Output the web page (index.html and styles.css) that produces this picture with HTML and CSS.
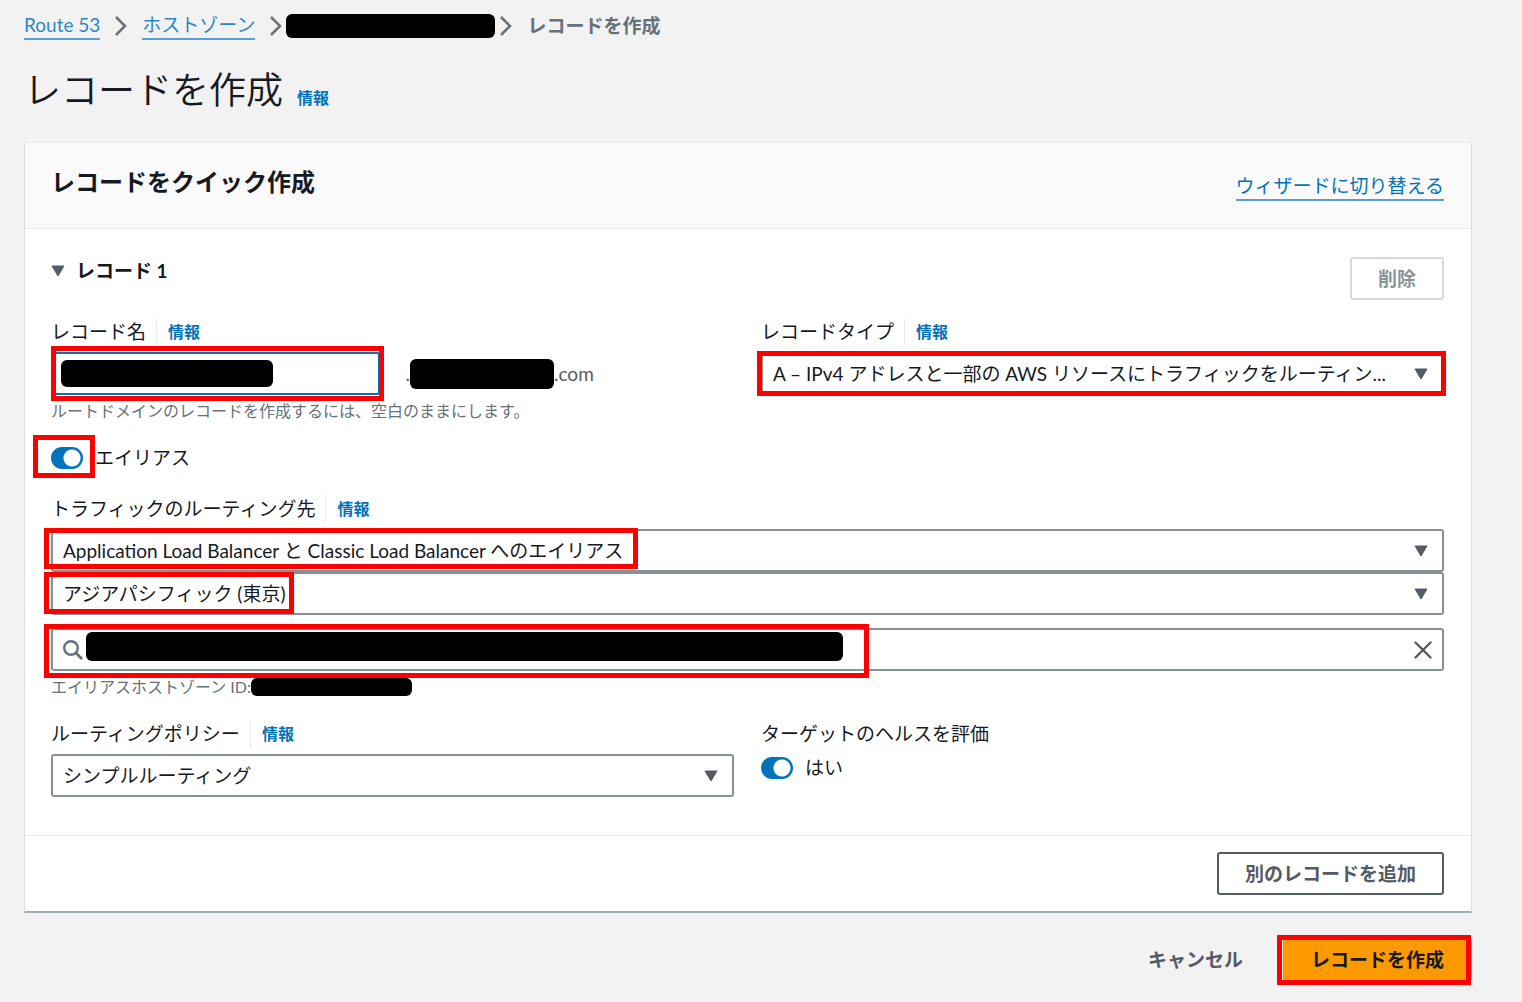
FILE: index.html
```html
<!DOCTYPE html>
<html lang="ja">
<head>
<meta charset="utf-8">
<meta name="viewport" content="width=device-width, initial-scale=1">
<title>レコードを作成</title>
<link rel="stylesheet" href="styles.css">
</head>
<body>
<svg class="sprite" aria-hidden="true">
  <symbol id="chevron" viewBox="0 0 12 20"><path d="M1 1l9 9-9 9" fill="none" stroke="currentColor" stroke-width="2.5"/></symbol>
  <symbol id="caret" viewBox="0 0 14 12"><path d="M1 1h12L7 11z" fill="currentColor" stroke="currentColor" stroke-linejoin="round"/></symbol>
</svg>

<nav aria-label="パンくずリスト">
  <ol class="breadcrumb">
    <li><a class="link" href="#">Route 53</a></li>
    <li class="separator"><svg class="chevron"><use href="#chevron"/></svg></li>
    <li><a class="link" href="#">ホストゾーン</a></li>
    <li class="separator separator-tight"><svg class="chevron"><use href="#chevron"/></svg></li>
    <li><span class="redacted redacted-zone"></span></li>
    <li class="separator separator-after"><svg class="chevron"><use href="#chevron"/></svg></li>
    <li class="current">レコードを作成</li>
  </ol>
</nav>

<main>
  <header class="page-title">
    <h1>レコードを作成</h1>
    <a class="info" href="#">情報</a>
  </header>

  <form>
    <section class="panel">
      <header class="panel-header">
        <h2>レコードをクイック作成</h2>
        <a class="link wizard-link" href="#">ウィザードに切り替える</a>
      </header>

      <div class="panel-body">
        <div class="record-bar">
          <h3><svg class="caret"><use href="#caret"/></svg>レコード 1</h3>
          <button class="button" type="button" disabled>削除</button>
        </div>

        <div class="sections">
          <div class="columns">
            <div class="field">
              <div class="label-row">
                <label for="record-name">レコード名</label>
                <a class="info" href="#">情報</a>
              </div>
              <div class="name-row">
                <div class="highlight highlight-name">
                  <input class="control name-input" id="record-name" type="text">
                  <span class="redacted redacted-name"></span>
                </div>
                <span class="domain">.<span class="redacted redacted-domain"></span>.com</span>
              </div>
              <p class="hint">ルートドメインのレコードを作成するには、空白のままにします。</p>
            </div>

            <div class="field">
              <div class="label-row">
                <label for="record-type">レコードタイプ</label>
                <a class="info" href="#">情報</a>
              </div>
              <div class="select highlight highlight-type">
                <select class="control" id="record-type"><option>A – IPv4 アドレスと一部の AWS リソースにトラフィックをルーティン...</option></select>
                <svg class="caret"><use href="#caret"/></svg>
              </div>
            </div>
          </div>

          <div class="toggle-row">
            <span class="highlight highlight-toggle"><input class="toggle" id="alias" type="checkbox" role="switch" checked></span>
            <label for="alias">エイリアス</label>
          </div>

          <div class="field">
            <div class="label-row">
              <label for="target">トラフィックのルーティング先</label>
              <a class="info" href="#">情報</a>
            </div>
            <div class="stack">
              <div class="select">
                <select class="control" id="target"><option>Application Load Balancer と Classic Load Balancer へのエイリアス</option></select>
                <svg class="caret"><use href="#caret"/></svg>
                <span class="mark mark-target"></span>
              </div>
              <div class="select">
                <select class="control" aria-label="リージョン"><option>アジアパシフィック (東京)</option></select>
                <svg class="caret"><use href="#caret"/></svg>
                <span class="mark mark-region"></span>
              </div>
              <div class="control search">
                <svg class="search-icon" viewBox="0 0 20 20"><circle cx="8" cy="8" r="6.8" fill="none" stroke="currentColor" stroke-width="2.4"/><path d="M13 13l6 6" stroke="currentColor" stroke-width="2.6"/></svg>
                <input type="text" aria-label="ロードバランサー">
                <button class="clear" type="button" aria-label="クリア"><svg viewBox="0 0 18 18"><path d="M1.500 1.500l15 15M16.500 1.500l-15 15" fill="none" stroke="currentColor" stroke-width="2.400" stroke-linecap="round"/></svg></button>
                <span class="redacted redacted-balancer"></span>
                <span class="mark mark-balancer"></span>
              </div>
            </div>
            <p class="hint">エイリアスホストゾーン ID:<span class="redacted redacted-id"></span></p>
          </div>

          <div class="columns">
            <div class="field">
              <div class="label-row">
                <label for="policy">ルーティングポリシー</label>
                <a class="info" href="#">情報</a>
              </div>
              <div class="select">
                <select class="control" id="policy"><option>シンプルルーティング</option></select>
                <svg class="caret"><use href="#caret"/></svg>
              </div>
            </div>
            <div class="field">
              <div class="label-row" id="health-label">ターゲットのヘルスを評価</div>
              <div class="toggle-row">
                <input class="toggle" id="health" type="checkbox" role="switch" aria-describedby="health-label" checked>
                <label for="health">はい</label>
              </div>
            </div>
          </div>
        </div>
      </div>

      <footer class="panel-footer">
        <button class="button" type="button">別のレコードを追加</button>
      </footer>
    </section>

    <div class="actions">
      <button class="button button-plain" type="button">キャンセル</button>
      <span class="highlight highlight-submit"><button class="button button-primary" type="submit">レコードを作成</button></span>
    </div>
  </form>
</main>
</body>
</html>
```

FILE: styles.css
```css
* { box-sizing: border-box; }

:root {
  --text: #16191f;
  --muted: #545b64;
  --hint: #687078;
  --blue: #0073bb;
  --line: #eaeded;
  --red: #ff0000;
}

body {
  margin: 0;
  padding: 12px 50px 16px 24px;
  background: #f2f2f2;
  color: var(--text);
  font: 400 19px/28px Lato, "Noto Sans CJK JP", sans-serif;
}

h1, h2, h3, p, ol { margin: 0; padding: 0; }
input, select, button { font: inherit; color: inherit; }
a { color: var(--blue); text-decoration: none; }
.sprite { display: none; }

/* Breadcrumb */
.breadcrumb {
  display: flex;
  align-items: center;
  list-style: none;
  color: var(--hint);
}
.breadcrumb li { display: flex; }
.breadcrumb .link { line-height: 26px; color: #2f86c6; }
.separator { padding: 0 15px; }
.separator-tight { padding-right: 4px; }
.separator-after { padding-left: 5px; }
.chevron { width: 12px; height: 20px; }
.current { font-weight: 700; }
.link { border-bottom: 2px solid #5b9fd2; }

/* Page title */
.page-title {
  display: flex;
  align-items: baseline;
  gap: 14px;
  padding: 26px 0 28px;
}
h1 { font-size: 37px; line-height: 48px; font-weight: 350; }
.info { font-size: 16px; line-height: 28px; font-weight: 700; }

/* Panel */
.panel {
  background: #fff;
  border: 1px solid #d9dddd;
  border-top-color: var(--line);
  border-bottom: 2px solid #a5adb0;
}
.panel-header {
  display: flex;
  justify-content: space-between;
  align-items: flex-start;
  padding: 23px 27px 27px 26px;
  background: #fafafa;
  border-bottom: 1px solid var(--line);
}
h2 { font-size: 24px; line-height: 32px; font-weight: 700; }
.wizard-link { margin-top: 7px; line-height: 26px; }
.panel-body { padding: 28px 27px 38px 26px; }
.panel-footer {
  display: flex;
  justify-content: flex-end;
  padding: 16px 27px;
  border-top: 1px solid var(--line);
}

.record-bar {
  display: flex;
  justify-content: space-between;
  align-items: flex-start;
  margin-bottom: 18px;
}
h3 {
  display: flex;
  align-items: center;
  gap: 11px;
  font-size: 19px;
  line-height: 28px;
}

/* Form layout */
.sections { display: grid; gap: 23px; }
.columns { display: grid; grid-template-columns: 1fr 1fr; gap: 27px; }
.field { display: flex; flex-direction: column; gap: 6px; }
.label-row { display: flex; line-height: 28px; }
.label-row .info {
  margin-left: 10px;
  padding-left: 11px;
  border-left: 1px solid var(--line);
}
.hint {
  display: flex;
  align-items: center;
  font-size: 16px;
  line-height: 20px;
  color: var(--hint);
}
.name-row {
  display: grid;
  grid-template-columns: 1fr 1fr;
  align-items: center;
  gap: 26px;
}
.domain { display: flex; align-items: center; color: var(--muted); }

/* Controls */
.control {
  width: 100%;
  height: 43px;
  padding: 0 50px 0 10px;
  border: 2px solid #879196;
  border-radius: 3px;
  background: #fff;
  appearance: none;
  outline: none;
}
.name-input { display: block; border-color: var(--blue); }
.select { display: grid; align-items: center; position: relative; }
.select > * { grid-area: 1 / 1; }
.select .caret { justify-self: end; margin-right: 16px; pointer-events: none; }
.caret { width: 14px; height: 12px; color: var(--muted); }
.stack .select + .search { margin-top: 13px; }
.search {
  position: relative;
  display: flex;
  align-items: center;
  padding: 0 10px;
}
.search input {
  flex: 1;
  min-width: 0;
  border: 0;
  outline: none;
  background: none;
}
.search-icon { width: 20px; height: 20px; color: var(--hint); }
.clear {
  display: flex;
  padding: 0;
  border: 0;
  background: none;
  color: var(--muted);
}
.clear svg { width: 18px; height: 18px; }

.toggle-row { display: flex; align-items: center; gap: 12px; }
.toggle {
  display: block;
  flex: none;
  width: 32px;
  height: 22px;
  margin: 0;
  border-radius: 11px;
  background: radial-gradient(circle at 21px 11px, #fff 8px, var(--blue) 9px);
  appearance: none;
}

.button {
  height: 43px;
  padding: 0 26px;
  border: 2px solid var(--muted);
  border-radius: 3px;
  background: #fff;
  color: var(--muted);
  font-weight: 700;
  white-space: nowrap;
}
.button:disabled { border-color: #d5dbdb; color: #879596; }
.button-plain { border-color: transparent; background: none; }
.button-primary {
  border-color: #ff9900;
  background: #ff9900;
  color: var(--text);
}
.actions {
  display: flex;
  justify-content: flex-end;
  gap: 12px;
  padding-top: 25px;
}

/* Blacked-out values */
.redacted { background: #000; border-radius: 6px; }
.redacted-zone { width: 209px; height: 24px; }
.redacted-domain { width: 144px; height: 30px; }
.redacted-id { width: 161px; height: 18px; }
.redacted-name { position: absolute; left: 10px; top: 8px; width: 212px; height: 27px; }
.redacted-balancer { position: absolute; left: 33px; top: 2px; width: 757px; height: 29px; }

/* Red call-outs laid over the form */
.highlight { position: relative; }
.highlight::after, .mark {
  content: "";
  position: absolute;
  border: 5px solid var(--red);
  pointer-events: none;
}
.highlight-name::after { inset: -6px -4px -6px 0; }
.highlight-type::after { inset: -1px -2px -1px -4px; }
.highlight-toggle::after { inset: -12px -12px -9px -18px; }
.highlight-submit::after { inset: -3px 1px -4px -6px; }
.mark-target { left: -7px; top: -1px; width: 594px; height: 41px; }
.mark-region { left: -7px; top: 0; width: 250px; height: 42px; }
.mark-balancer { left: -9px; top: -6px; width: 825px; height: 54px; }
```
